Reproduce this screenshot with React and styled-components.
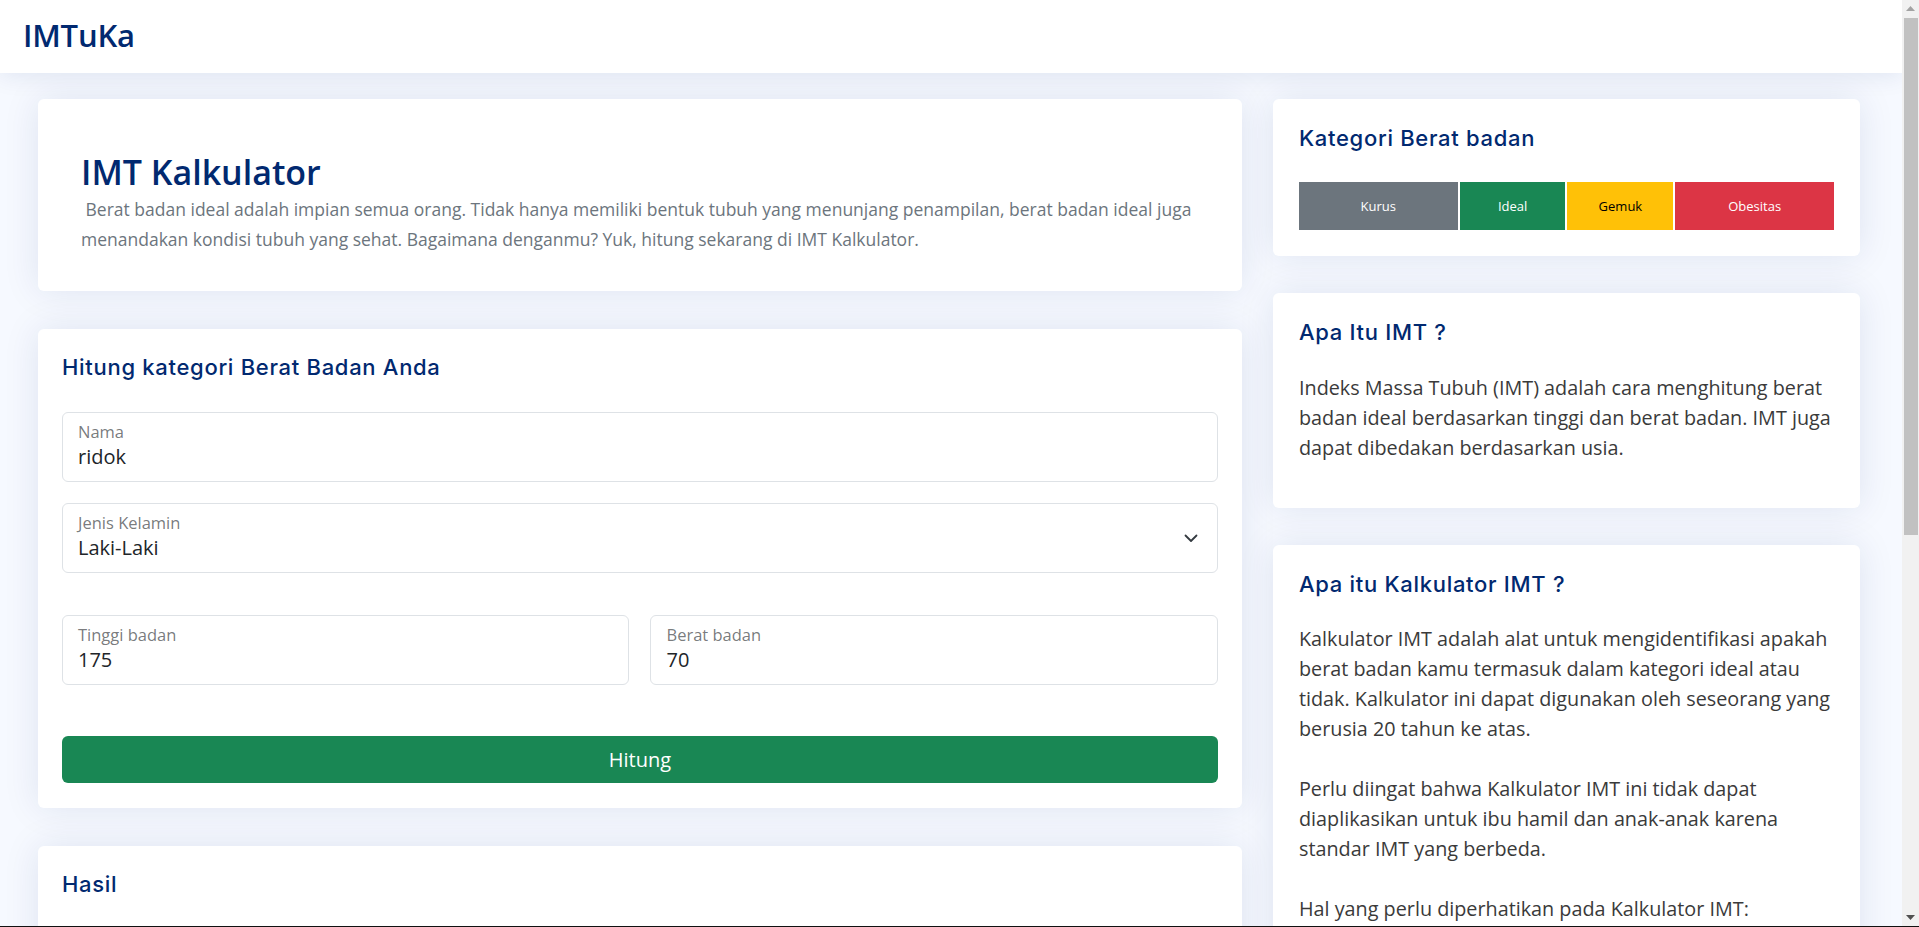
import styled, { createGlobalStyle } from "styled-components"

const GlobalStyle = createGlobalStyle`
  * { box-sizing: border-box; }
  body {
    margin: 0;
    font-family: "Open Sans", "Liberation Sans", sans-serif;
    background: #f6f9ff;
    color: #444444;
  }
`

const kategori = [
  { nama: "Kurus", warna: "#6c757d", teks: "#ffffff", lebar: 3 },
  { nama: "Ideal", warna: "#198754", teks: "#ffffff", lebar: 2 },
  { nama: "Gemuk", warna: "#ffc107", teks: "#000000", lebar: 2 },
  { nama: "Obesitas", warna: "#dc3545", teks: "#ffffff", lebar: 3 },
]

const hal = [
  "Kalkulator IMT hanya memberikan perkiraan kategori berat badan.",
  "Hasil IMT tidak membedakan massa otot dan lemak tubuh.",
  "Atlet dengan massa otot tinggi bisa mendapatkan nilai IMT yang tinggi.",
  "Konsultasikan hasil dengan tenaga kesehatan untuk penilaian lebih lanjut.",
]

export default function App() {
  return (
    <>
      <GlobalStyle />
      <Shell>
        <Page>
          <Header>
            <Logo>IMTuKa</Logo>
          </Header>
          <Main>
            <Kolom $gap={38}>
              <IntroCard>
                <PageTitle>IMT Kalkulator</PageTitle>
                <Intro>
                  {" "}Berat badan ideal adalah impian semua orang. Tidak hanya memiliki bentuk tubuh yang menunjang penampilan, berat badan ideal juga menandakan kondisi tubuh yang sehat. Bagaimana denganmu? Yuk, hitung sekarang di IMT Kalkulator.
                </Intro>
              </IntroCard>

              <Card>
                <CardTitle $mb={32}>Hitung kategori Berat Badan Anda</CardTitle>
                <Baris $mb={21}>
                  <Field>
                    <FieldIsi>
                      <Label>Nama</Label>
                      <Nilai>ridok</Nilai>
                    </FieldIsi>
                  </Field>
                </Baris>
                <Baris $mb={42}>
                  <Field>
                    <FieldIsi>
                      <Label>Jenis Kelamin</Label>
                      <Nilai>Laki-Laki</Nilai>
                    </FieldIsi>
                    <svg width="16" height="16" viewBox="0 0 16 16" fill="none">
                      <path d="M2.5 5.5l5.5 5.5 5.5-5.5" stroke="#343a40" strokeWidth="1.8" strokeLinecap="round" strokeLinejoin="round" />
                    </svg>
                  </Field>
                </Baris>
                <Baris $mb={51}>
                  <Field>
                    <FieldIsi>
                      <Label>Tinggi badan</Label>
                      <Nilai>175</Nilai>
                    </FieldIsi>
                  </Field>
                  <Field>
                    <FieldIsi>
                      <Label>Berat badan</Label>
                      <Nilai>70</Nilai>
                    </FieldIsi>
                  </Field>
                </Baris>
                <Tombol>Hitung</Tombol>
              </Card>

              <Card>
                <CardTitle $mb={70}>Hasil</CardTitle>
                <Teks>Silakan isi data di atas lalu tekan tombol Hitung untuk melihat kategori berat badan Anda.</Teks>
              </Card>
            </Kolom>

            <Kolom $gap={37}>
              <SideCard>
                <CardTitle $mb={31}>Kategori Berat badan</CardTitle>
                <Skala>
                  {kategori.map((k) => (
                    <Segmen key={k.nama} $warna={k.warna} $teks={k.teks} $lebar={k.lebar}>
                      {k.nama}
                    </Segmen>
                  ))}
                </Skala>
              </SideCard>

              <SideCard $pb={45}>
                <CardTitle $mb={27}>Apa Itu IMT ?</CardTitle>
                <Teks>
                  Indeks Massa Tubuh (IMT) adalah cara menghitung berat badan ideal berdasarkan tinggi dan berat badan. IMT juga dapat dibedakan berdasarkan usia.
                </Teks>
              </SideCard>

              <SideCard $pb={40}>
                <CardTitle $mb={27}>Apa itu Kalkulator IMT ?</CardTitle>
                <Teks $mb={30}>
                  Kalkulator IMT adalah alat untuk mengidentifikasi apakah berat badan kamu termasuk dalam kategori ideal atau tidak. Kalkulator ini dapat digunakan oleh seseorang yang berusia 20 tahun ke atas.
                </Teks>
                <Teks $mb={30}>
                  Perlu diingat bahwa Kalkulator IMT ini tidak dapat diaplikasikan untuk ibu hamil dan anak-anak karena standar IMT yang berbeda.
                </Teks>
                <Teks>Hal yang perlu diperhatikan pada Kalkulator IMT:</Teks>
                <Daftar>
                  {hal.map((h) => <li key={h}>{h}</li>)}
                </Daftar>
              </SideCard>
            </Kolom>
          </Main>
        </Page>

        <ScrollBar>
          <ScrollBtn>
            <svg width="9" height="5" viewBox="0 0 9 5"><path d="M0 5L4.5 0 9 5z" fill="#a3a3a3" /></svg>
          </ScrollBtn>
          <ScrollTrack>
            <Thumb />
          </ScrollTrack>
          <ScrollBtn>
            <svg width="9" height="5" viewBox="0 0 9 5"><path d="M0 0L4.5 5 9 0z" fill="#505050" /></svg>
          </ScrollBtn>
        </ScrollBar>
      </Shell>
    </>
  )
}

const Shell = styled.div`
  display: flex;
  height: 100vh;
  overflow: hidden;
  border-bottom: 1px solid #111111;
`

const Page = styled.div`
  flex: 1;
  min-width: 0;
  overflow: hidden;
`

const ScrollBar = styled.div`
  width: 17px;
  flex-shrink: 0;
  display: flex;
  flex-direction: column;
  background: #f1f1f1;
`

const ScrollBtn = styled.div`
  height: 17px;
  display: flex;
  align-items: center;
  justify-content: center;
`

const ScrollTrack = styled.div`
  flex: 1;
  padding: 1px 1px 0 2px;
`

const Thumb = styled.div`
  height: 517px;
  background: #c1c1c1;
`

const Header = styled.header`
  position: relative;
  z-index: 2;
  height: 73px;
  background: #ffffff;
  display: flex;
  align-items: center;
  padding: 0 0 4px 23px;
  box-shadow: 0px 2px 24px rgba(1, 41, 112, 0.1);
`

const Logo = styled.div`
  font-family: "Open Sans", sans-serif;
  font-size: 31px;
  font-weight: 600;
  color: #012970;
  letter-spacing: -0.2px;
`

const Main = styled.main`
  display: grid;
  grid-template-columns: minmax(0, 2.051fr) minmax(0, 1fr);
  column-gap: 31px;
  align-items: start;
  padding: 26px 42px 40px 38px;
`

const Kolom = styled.div`
  display: flex;
  flex-direction: column;
  gap: ${(p) => p.$gap}px;
`

const Card = styled.section`
  background: #ffffff;
  border-radius: 6px;
  box-shadow: 0px 0 36px rgba(1, 41, 112, 0.1);
  padding: 25px 24px 25px 24px;
`

const IntroCard = styled(Card)`
  padding: 53px 44px 36px 43px;
`

const SideCard = styled(Card)`
  padding: 26px 26px ${(p) => p.$pb || 26}px 26px;
`

const PageTitle = styled.h1`
  margin: 0 0 1px;
  font-family: "Open Sans", sans-serif;
  font-size: 34px;
  font-weight: 600;
  line-height: 1.2;
  color: #012970;
`

const Intro = styled.p`
  margin: 0;
  font-size: 17.5px;
  line-height: 30.6px;
  color: #6c757d;
  white-space: pre-wrap;
`

const CardTitle = styled.h2`
  margin: 0 0 ${(p) => p.$mb}px;
  font-family: Inter, "Noto Sans", sans-serif;
  font-size: 22px;
  font-weight: 500;
  line-height: 1.2;
  letter-spacing: 0.7px;
  color: #012970;
`

const Baris = styled.div`
  display: flex;
  gap: 21px;
  margin-bottom: ${(p) => p.$mb}px;
`

const Field = styled.div`
  flex: 1;
  height: 70px;
  display: flex;
  align-items: center;
  gap: 12px;
  padding: 0 18px 0 15px;
  border: 1px solid #dee2e6;
  border-radius: 6px;
  background: #ffffff;
`

const FieldIsi = styled.div`
  flex: 1;
  align-self: flex-start;
  display: flex;
  flex-direction: column;
  gap: 3px;
  padding-top: 9px;
`

const Label = styled.span`
  font-size: 16.5px;
  line-height: 20px;
  color: rgba(33, 37, 41, 0.62);
`

const Nilai = styled.span`
  font-size: 20px;
  line-height: 24px;
  color: #212529;
`

const Tombol = styled.button`
  display: block;
  width: 100%;
  height: 47px;
  border: none;
  border-radius: 6px;
  background: #198754;
  color: #ffffff;
  font-family: "Open Sans", sans-serif;
  font-size: 20px;
  cursor: pointer;
`

const Skala = styled.div`
  display: flex;
  gap: 2px;
  height: 48px;
`

const Segmen = styled.div`
  flex: ${(p) => p.$lebar};
  display: flex;
  align-items: center;
  justify-content: center;
  background: ${(p) => p.$warna};
  color: ${(p) => p.$teks};
  font-size: 13px;
`

const Teks = styled.p`
  margin: 0 0 ${(p) => p.$mb || 0}px;
  font-size: 19.8px;
  line-height: 30px;
  color: #3a3a3a;
`

const Daftar = styled.ul`
  margin: 10px 0 0;
  padding-left: 24px;
  font-size: 19.8px;
  line-height: 30px;
  color: #3a3a3a;
`
